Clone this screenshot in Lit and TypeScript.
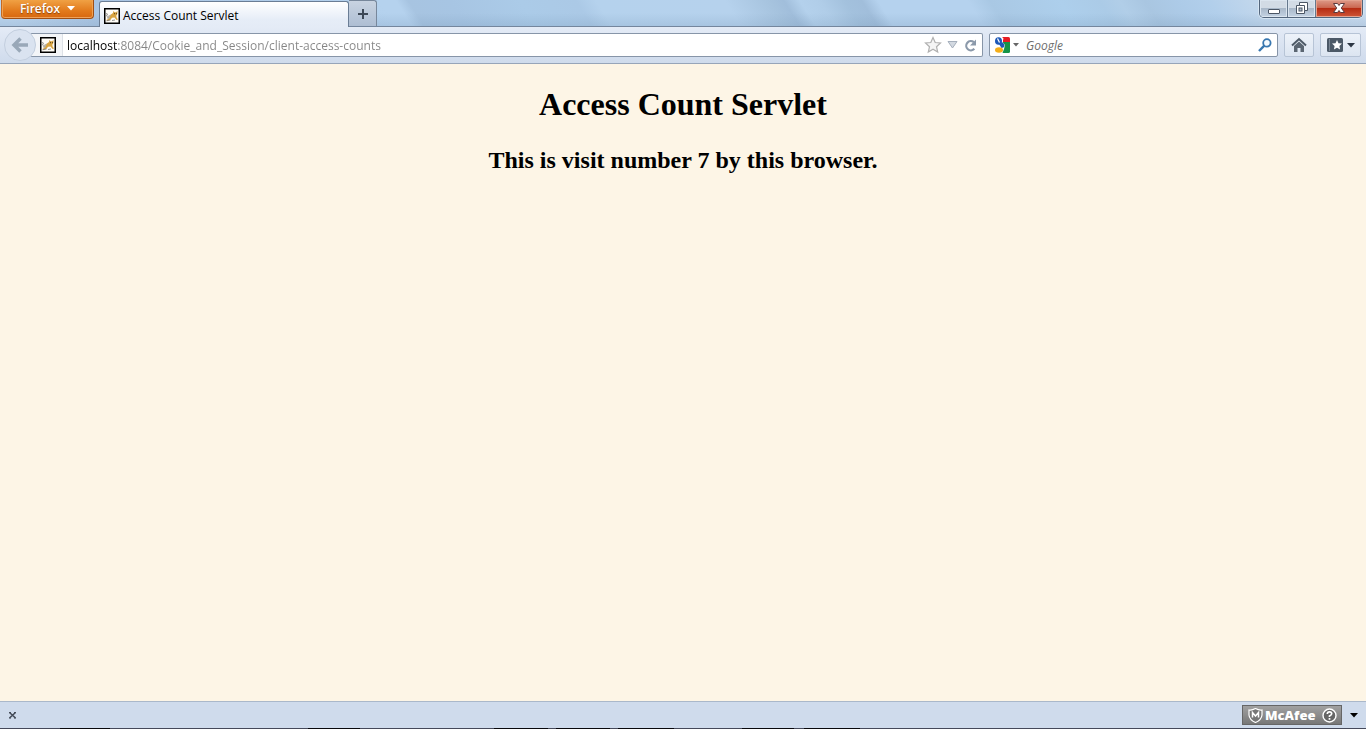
import { LitElement, html, css, svg } from "lit";
import { customElement } from "lit/decorators.js";

const stops: [number, string][] = [
  [0, "#bcd5ee"], [95, "#a9c4e2"], [380, "#b5d2ee"], [396, "#b5d2ee"], [408, "#a7c4e1"],
  [450, "#a7c5e3"], [520, "#abcbe8"], [576, "#abc9e6"], [596, "#b5d2ed"],
  [725, "#b6d2ed"], [770, "#a6c3de"], [784, "#a1bedb"], [800, "#b4d1ec"],
  [820, "#b0cde8"], [845, "#a3c1dd"], [862, "#a1bedb"], [878, "#b5d2ee"],
  [968, "#b5d2ee"], [990, "#a9c8e4"], [1060, "#adcfec"], [1100, "#abcbe7"],
  [1120, "#b1cee8"], [1145, "#a9c6e1"], [1180, "#adcbe8"], [1210, "#b2cfeb"],
  [1250, "#c0d6ec"], [1367, "#c9dbee"],
];

const cat = () => svg`
  <rect x=".75" y=".75" width="14.5" height="14.5" fill="#fffdf8" stroke="#000" stroke-width="1.5"/>
  <path d="M3 10.500L4.500 7.500 7 6.500 9 7l-1.500 2.500L5 11z" fill="#b9b3a8"/>
  <path d="M7 6.500L9 5l.3-2 1.300 1.200h1.400L13.500 3l-.2 3-1 1.800.3 1.800 1.400 1.900-1.500.5-2-2.500-2.500.2-1.500 2-3.500 1.200-.3-1.200 2.500-1.200z" fill="#d9a441"/>
  <path d="M2 5.500l1.500.5L2.500 8l1.700 1.500M2.500 12.800l4-.8M8 12.500l3-.5" fill="none" stroke="#777" stroke-width=".8"/>
  <path d="M10 5.700h.8M12 5.700h.8" stroke="#3a2b12"/>`;

@customElement("app-root")
export class AppRoot extends LitElement {
  static styles = css`
    :host { display: flex; flex-direction: column; min-height: 100vh; box-sizing: border-box; border-right: 1px solid #fff; font-family: "Open Sans", "Noto Sans", sans-serif; font-size: 12px; background: #fdf5e6; color: #000; }
    * { box-sizing: border-box; }
    button, input { font: inherit; margin: 0; padding: 0; border: 0; background: none; outline: 0; }
    button { display: flex; align-items: center; justify-content: center; }
    svg { display: block; flex: none; }
    .titlebar { position: relative; display: flex; align-items: flex-end; height: 27px; border-bottom: 1px solid #74869d; background: #b5d2ee; }
    .glass { position: absolute; inset: 0; width: 100%; height: 100%; }
    .firefox { position: relative; align-self: flex-start; width: 93px; height: 19px; gap: 7px; padding-bottom: 1px; margin: 0 5px 0 1px; border: 1px solid #a04f14; border-top: 0; border-left-color: #c56a20; border-radius: 0 0 4px 4px; background: linear-gradient(#f0a144, #e27a1c 60%, #d7670f); box-shadow: inset 0 -1px #f0a35b, inset 1px 0 #efa253, inset -1px 0 #efa253; color: #fff; font-weight: 600; text-shadow: 0 1px 1px #8a4108; }
    .tab { position: relative; display: flex; align-items: center; gap: 3px; width: 250px; height: 26px; margin-bottom: -1px; padding: 2px 4px 0; border: 1px solid #6a7d95; border-bottom: 0; border-radius: 3px 3px 0 0; background: linear-gradient(#fff, #e6edf7 70%, #e4ebf6); line-height: 16px; }
    .newtab { position: relative; width: 28px; height: 26px; border: 1px solid #77879b; border-left: 0; border-bottom: 0; border-radius: 0 3px 0 0; background: linear-gradient(#c8d3e1, #aebed3); }
    .window { position: relative; display: flex; align-self: flex-start; height: 18px; margin-left: auto; margin-right: 3px; border: 1px solid #53667d; border-top: 0; border-radius: 0 0 5px 5px; overflow: hidden; box-shadow: 0 0 0 1px #d5e4f2; }
    .window button { width: 28px; padding-bottom: 2px; background: linear-gradient(#d2dbe5 0 45%, #a9b8c9 50%, #c4d3e3); border-right: 1px solid #66788d; box-shadow: inset 0 0 0 1px #dbe5ef; }
    .window .close { width: 46px; border: 0; background: linear-gradient(#dd9a88, #cb6953 44%, #b52b12 48%, #cf5637); box-shadow: inset 0 0 0 1px #e4a390; }
    .nav { display: flex; align-items: center; height: 37px; padding: 0 5px 0 4px; border-bottom: 1px solid #97a5b9; background: linear-gradient(#e4ebf6, #cfdbec); }
    .back { position: relative; width: 32px; height: 32px; margin-right: -6px; border: 1px solid #c3cfdf; border-radius: 16px; background: #dae3f0; }
    .field { display: flex; align-items: center; height: 24px; border: 1px solid #8795a8; border-radius: 2px; background: #fff; min-width: 0; }
    .address { flex: 1; border-left: 0; padding-right: 5px; }
    .site { width: 33px; height: 22px; padding-left: 3px; border-right: 1px solid #dde1e7; background: #f3f5f8; }
    .url { flex: 1; min-width: 0; height: 22px; padding-left: 4px; background: linear-gradient(to right, #000 54px, #858585 54px); background-clip: text; -webkit-background-clip: text; -webkit-text-fill-color: transparent; }
    .star { margin-right: 5px; }
    .drop { margin-right: 6px; }
    .search { width: 289px; margin: 0 6px; padding: 0 5px 0 4px; }
    .query { flex: 1; min-width: 0; height: 22px; padding-left: 6px; font-style: italic; }
    .query::placeholder { color: #6d6d6d; opacity: 1; }
    .tool { width: 30px; height: 24px; border: 1px solid #b7c4d6; border-radius: 2px; background: linear-gradient(#edf2f9, #dce5f1); }
    .marks { width: 41px; margin-left: 6px; gap: 4px; }
    main { flex: 1; text-align: center; font-family: "Liberation Serif", serif; }
    h1 { margin: 21px 0 0; font-size: 32px; line-height: 38px; }
    h2 { margin: 23px 0 0; font-size: 24px; line-height: 28px; }
    footer { height: 28px; border-top: 1px solid #aab8ca; background: #cfdbec; }
    .bar { display: flex; align-items: center; justify-content: space-between; height: 26px; padding: 0 8px; }
    .edge { width: 100%; height: 1px; }
    .tray { display: flex; align-items: center; gap: 8px; }
    .mcafee { width: 100px; height: 20px; justify-content: flex-start; gap: 2px; padding: 0 4px 0 5px; border: 1px solid #666; background: linear-gradient(#a1a1a1, #777); color: #fff; font-family: "Open Sans", sans-serif; font-size: 13px; font-weight: 800; }
    .help { margin-left: auto; }
  `;

  render() {
    return html`
      <header class="titlebar">
        <svg class="glass" viewBox="0 0 1367 26" preserveAspectRatio="none" aria-hidden="true">
          <defs>
            <linearGradient id="sky" gradientUnits="userSpaceOnUse" x1="0" x2="1367" y1="0" y2="0" gradientTransform="skewX(32)">
              ${stops.map(([x, c]) => svg`<stop offset=${x / 1367} stop-color=${c}/>`)}
            </linearGradient>
            <linearGradient id="shade" x2="0" y2="1"><stop offset=".5" stop-color="#6788a8" stop-opacity="0"/><stop offset="1" stop-color="#6788a8" stop-opacity=".18"/></linearGradient>
          </defs>
          <rect width="1367" height="26" fill="url(#sky)"/>
          <rect width="1367" height="26" fill="url(#shade)"/>
        </svg>
        <button class="firefox">Firefox<svg width="8" height="5"><path d="M0 0h8L4 4.500z" fill="#fff"/></svg></button>
        <div class="tab"><svg width="16" height="16">${cat()}</svg>Access Count Servlet</div>
        <button class="newtab" aria-label="New tab"><svg width="12" height="12"><path d="M6 1v10M1 6h10" stroke="#3d4856" stroke-width="2"/></svg></button>
        <div class="window">
          <button aria-label="Minimize"><svg width="14" height="14"><rect x="1.500" y="8.500" width="11" height="4" rx=".5" fill="#fff" stroke="#4b5665"/></svg></button>
          <button aria-label="Restore"><svg width="14" height="14"><path d="M4.500 1.500h8v8h-3v3h-8v-8h3z" fill="#fff" stroke="#4b5665"/><path d="M4.500 4.500h5v5" fill="none" stroke="#4b5665"/><rect x="4" y="7" width="3" height="3" fill="#aebccb" stroke="#4b5665"/></svg></button>
          <button class="close" aria-label="Close"><svg width="14" height="14" viewBox="0 0 14 14"><path d="M1.500 2.500h4L7 4.500l1.500-2h4L9.300 7l3.200 4.500h-4L7 9.500l-1.500 2h-4L4.700 7z" fill="#fff" stroke="#5b3a3d"/></svg></button>
        </div>
      </header>
      <nav class="nav">
        <button class="back" aria-label="Back"><svg width="18" height="18"><path d="M9.500 2.500L3 9l6.500 6.500M3.500 9H17" fill="none" stroke="#99a8b8" stroke-width="3.500"/></svg></button>
        <div class="field address">
          <button class="site" aria-label="Site identity"><svg width="16" height="16">${cat()}</svg></button>
          <input class="url" aria-label="Address" .value=${"localhost:8084/Cookie_and_Session/client-access-counts"} />
          <button class="star" aria-label="Bookmark"><svg width="18" height="18"><path d="M9 1.500l2.200 5 5.300.5-4 3.700 1.200 5.300L9 13.300 4.300 16l1.200-5.300-4-3.700 5.300-.5z" fill="#f5f5f5" stroke="#b0b0b0" stroke-width="1.200"/></svg></button>
          <button class="drop" aria-label="History"><svg width="11" height="8"><path d="M1 .5h9L5.500 7z" fill="#d3d9e1" stroke="#a5afbc"/></svg></button>
          <button aria-label="Reload"><svg width="13" height="13"><path d="M9.800 3.200A4.600 4.600 0 1 0 10.300 9.800" fill="none" stroke="#8b99aa" stroke-width="2.200"/><path d="M12 .5v6H6z" fill="#8b99aa"/></svg></button>
        </div>
        <div class="field search">
          <button aria-label="Search engine"><svg width="16" height="16"><path d="M8 0h6.500Q16 0 16 1.500V5H9z" fill="#e51c23"/><path d="M9 5h7v9.500q0 1.500-1.500 1.500H8z" fill="#159447"/><path d="M0 1.500Q0 0 1.500 0H8l1.500 1.500L8.500 5l2.500 3-1 4-1.500 4H1.500Q0 16 0 14.500z" fill="#fff"/><ellipse cx="4.500" cy="4" rx="3.500" ry="3.800" fill="#1d58b8"/><path d="M3.500 1.500l2 4" stroke="#fff" stroke-width="1.300"/><path d="M5 7l3-2q3 2 2.500 4T7.500 11z" fill="#1d58b8"/><ellipse cx="5" cy="13" rx="4" ry="2.700" fill="#f5ae18"/></svg></button>
          <svg width="10" height="4"><path d="M3 0h6L6 3.500z" fill="#666"/></svg>
          <input class="query" aria-label="Search" placeholder="Google" />
          <button aria-label="Go"><svg width="14" height="14"><circle cx="8.900" cy="4.900" r="3.700" fill="#f4faff" stroke="#3877b0" stroke-width="1.800"/><path d="M6.300 7.700L1 13" stroke="#3877b0" stroke-width="2.400"/></svg></button>
        </div>
        <button class="tool" aria-label="Home"><svg width="16" height="16"><path d="M1 8.500L8 2l7 6.500" fill="none" stroke="#4d5966" stroke-width="2"/><path d="M3 9l5-4.500L13 9v6h-3.500v-4h-3v4H3z" fill="#5b6672"/></svg></button>
        <button class="tool marks" aria-label="Bookmarks"><svg width="16" height="14"><rect width="16" height="14" rx="1.500" fill="#4c5967"/><path d="M2.500 1v12" stroke="#7b8794"/><path d="M10 2l1.500 3.200 3.500.4-2.600 2.400.7 3.500-3.100-1.700-3.100 1.700.7-3.500L5 5.600l3.500-.4z" fill="#fff"/></svg><svg width="8" height="5"><path d="M0 0h8L4 4.500z" fill="#2d3744"/></svg></button>
      </nav>
      <main>
        <h1>Access Count Servlet</h1>
        <h2>This is visit number 7 by this browser.</h2>
      </main>
      <footer>
        <div class="bar">
          <button aria-label="Close bar"><svg width="9" height="8"><path d="M1.500 1.500l6 5.500M7.500 1.500l-6 5.500" stroke="#454c59" stroke-width="1.600"/><path d="M1 1.500h2M6 1.500h2M1 7h2M6 7h2" stroke="#454c59"/></svg></button>
          <div class="tray">
            <button class="mcafee"><svg width="15" height="15"><path d="M7.500.5Q4 2.500 1 2v5q.5 5 6.500 7.500Q13.500 12 14 7V2Q11 2.500 7.500.5z" fill="#777" stroke="#fff" stroke-width="1.200"/><path d="M4.500 9.500V4.500l3 3.500 3-3.500v5" fill="none" stroke="#fff" stroke-width="1.500"/></svg>McAfee<svg class="help" width="15" height="15"><circle cx="7.500" cy="7.500" r="6.500" fill="#666" stroke="#fff" stroke-width="1.400"/><path d="M5.300 6q0-2.200 2.200-2.200T9.700 5.800Q9.700 7 7.500 8v1M7.500 10v1.800" fill="none" stroke="#fff" stroke-width="1.700"/></svg></button>
            <svg width="8" height="5"><path d="M0 0h8L4 4.500z"/></svg>
          </div>
        </div>
        <svg class="edge" viewBox="0 0 1366 1" preserveAspectRatio="none" aria-hidden="true"><path d="M0 0h1366v1H0z" fill="#45495a"/><path d="M60 0h50v1H60zM308 0h52v1h-52zM494 0h54v1h-54zM556 0h54v1h-54zM618 0h56v1h-56zM742 0h52v1h-52zM804 0h56v1h-56z" fill="#08080c"/></svg>
      </footer>
    `;
  }
}
